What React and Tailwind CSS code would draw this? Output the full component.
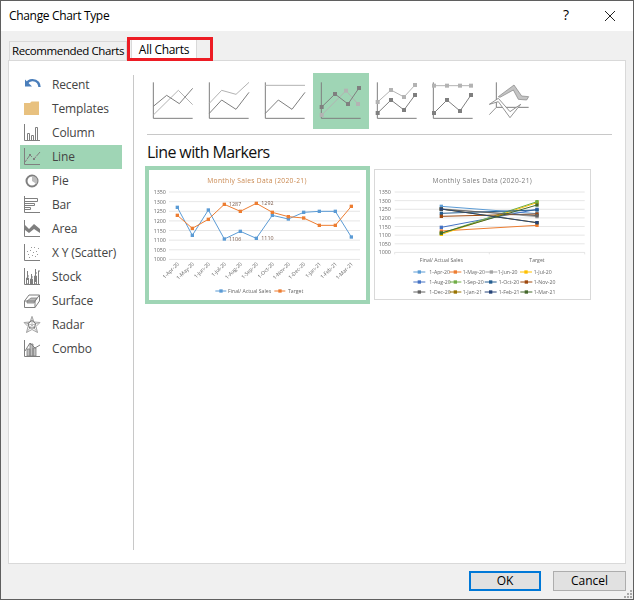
import React from 'react';

const GRAY = '#7f7f7f';
const LIGHT = '#b3b3b3';

const toPoints = (pts) => pts.map((p) => p.join(',')).join(' ');

function Markers({ pts, color }) {
  return pts.map((p, i) => <rect key={i} x={p[0] - 6} y={p[1] - 6} width="12" height="12" fill={color} />);
}

// 56px gallery thumbnails, drawn on a 168 unit grid
const lineTypes = [
  { dark: [[25, 100], [65, 67], [103, 92], [143, 46]], light: [[25, 126], [100, 52], [143, 95]] },
  { dark: [[25, 121], [62, 81], [105, 109], [144, 58]], light: [[25, 91], [62, 52], [105, 64], [144, 28]] },
  { dark: [[25, 121], [64, 81], [105, 109], [144, 58]], light: [[25, 37], [144, 37]] },
  { dark: [[26, 102], [66, 63], [105, 93], [138, 45]], light: [[26, 126], [99, 53], [135, 93]], markers: true, active: true },
  { dark: [[26, 120], [66, 81], [105, 111], [138, 66]], light: [[26, 87], [66, 51], [105, 72], [138, 36]], markers: true },
  { dark: [[27, 120], [66, 81], [105, 114], [138, 66]], light: [[27, 38], [66, 38], [105, 38], [138, 38]], markers: true },
];

function GalleryIcon({ type }) {
  return (
    <div className={`w-[56px] h-[56px] ${type.active ? 'bg-[#9fd5b5]' : ''}`}>
      <svg width="56" height="56" viewBox="0 0 168 168" fill="none">
        <path d="M25 28V136H143" stroke={GRAY} strokeWidth="3" />
        <polyline points={toPoints(type.light)} stroke={LIGHT} strokeWidth="3" />
        <polyline points={toPoints(type.dark)} stroke={GRAY} strokeWidth="3" />
        {type.markers && <Markers pts={type.light} color={LIGHT} />}
        {type.markers && <Markers pts={type.dark} color={GRAY} />}
      </svg>
    </div>
  );
}

function Gallery3D() {
  return (
    <div className="w-[56px] h-[56px]">
      <svg width="56" height="56" viewBox="0 0 168 168" fill="none">
        <path d="M46 28V103H143" stroke={GRAY} strokeWidth="3" />
        <path d="M52 71L99 36L122 69L143 71L137 81L112 79L97 51L57 73Z" fill="#c4c4c4" stroke={GRAY} strokeWidth="2" />
        <path d="M25 94L52 76L87 116L119 94L87 134L52 86Z" fill="#fff" stroke={GRAY} strokeWidth="2.5" />
        <path d="M25 125L46 103" stroke={GRAY} strokeWidth="2.5" />
      </svg>
    </div>
  );
}

function SideIcon({ name }) {
  const s = { stroke: GRAY, strokeWidth: 1, fill: 'none' };
  const axis = <path d="M1.5 0V16.5H17" {...s} />;
  switch (name) {
    case 'Recent':
      return (
        <svg width="18" height="18" viewBox="0 0 18 18" fill="none">
          <path d="M4 7C6 3.5 12 3 15 6.5C16 8 16.5 9.5 16.5 11" stroke="#4a7ebb" strokeWidth="2.4" />
          <path d="M2 3.5V10.5H9Z" fill="#4a7ebb" />
        </svg>
      );
    case 'Templates':
      return (
        <svg width="18" height="18" viewBox="0 0 18 18">
          <path d="M1 3H7L8.5 1.5H16V15H1Z" fill="#e8c17f" />
        </svg>
      );
    case 'Column':
      return (
        <svg width="18" height="18" viewBox="0 0 18 18">
          {axis}
          <path d="M4.5 16V9.5H6.5V16M8.5 16V11.5H10.5V16M12.5 16V3.5H14.5V16" {...s} />
        </svg>
      );
    case 'Line':
      return (
        <svg width="18" height="18" viewBox="0 0 18 18">
          {axis}
          <path d="M2 14L7 7L11 11L17 4" {...s} />
          <path d="M2 10L6 13L12 7L16 12" stroke="#b0c9b8" strokeWidth="1" fill="none" />
          <rect x="6" y="6" width="2" height="2" fill={GRAY} />
          <rect x="10" y="10" width="2" height="2" fill={GRAY} />
        </svg>
      );
    case 'Pie':
      return (
        <svg width="18" height="18" viewBox="0 0 18 18">
          <circle cx="9" cy="9" r="5.5" stroke={GRAY} strokeWidth="2" fill="#fff" />
          <path d="M9 4V9L13.5 12A5 5 0 0 0 9 4Z" fill="#bdbdbd" />
        </svg>
      );
    case 'Bar':
      return (
        <svg width="18" height="18" viewBox="0 0 18 18">
          <path d="M1.5 0V16.5H17" {...s} />
          <path d="M1.5 2.5H14.5V5.5H1.5M1.5 7.5H11.5V9.5H1.5M1.5 11.5H7.5V13.5H1.5" {...s} />
        </svg>
      );
    case 'Area':
      return (
        <svg width="18" height="18" viewBox="0 0 18 18">
          {axis}
          <path d="M2 5L6 9L11 4L17 9V13L11 9L6 13L2 10Z" fill={GRAY} />
        </svg>
      );
    case 'X Y (Scatter)':
      return (
        <svg width="18" height="18" viewBox="0 0 18 18">
          {axis}
          {[[5, 10], [7, 6], [9, 11], [11, 3], [13, 7], [15, 4], [6, 13], [10, 8], [12, 12], [4, 7], [14, 10], [8, 3]].map((d, i) => (
            <rect key={i} x={d[0]} y={d[1]} width="1" height="1" fill="#999" />
          ))}
        </svg>
      );
    case 'Stock':
      return (
        <svg width="18" height="18" viewBox="0 0 18 18">
          {axis}
          <path d="M4.5 3V12M4 8H6M8.5 6V16M8 9H10M12.5 1V14M12 5H14M15.5 3V16M15 3H17" {...s} />
          <path d="M3.5 10H5.5V16H3.5ZM7.5 11H9.5V16H7.5ZM11.5 8H13.5V16H11.5Z" {...s} />
        </svg>
      );
    case 'Surface':
      return (
        <svg width="18" height="18" viewBox="0 0 18 18">
          <path d="M1.5 9L6 3H16.5V9L12 15.5H1.5Z" {...s} />
          <path d="M4 9L8 6H14L11 11H4Z" fill="#b9b9b9" stroke={GRAY} strokeWidth="0.8" />
          <path d="M1.5 9H12V15.5M12 9L16.5 3" {...s} />
        </svg>
      );
    case 'Radar':
      return (
        <svg width="18" height="18" viewBox="0 0 18 18">
          <path d="M9 0.5L11 6L17 6.5L13 10.5L14.5 16.5L9 13.5L3.5 16.5L5 10.5L1 6.5L7 6Z" stroke="#a6a6a6" strokeWidth="1" fill="none" />
          <path d="M9 0.5V9M17 6.5L9 9M14.5 16.5L9 9M3.5 16.5L9 9M1 6.5L9 9" stroke="#a6a6a6" strokeWidth="0.8" />
          <path d="M9 4.5L12.5 7.5L11.5 12L6.5 12L5 7.5Z" stroke="#6f6f6f" strokeWidth="1" fill="none" />
        </svg>
      );
    default:
      return (
        <svg width="18" height="18" viewBox="0 0 18 18">
          {axis}
          <path d="M4 9H7V16H4ZM7 4H10V16H7ZM10 8H13V16H10Z" fill="#c0c0c0" stroke={GRAY} strokeWidth="0.8" />
          <path d="M2 11L7 3L12 8L17 5" {...s} />
        </svg>
      );
  }
}

const chartTypes = ['Recent', 'Templates', 'Column', 'Line', 'Pie', 'Bar', 'Area', 'X Y (Scatter)', 'Stock', 'Surface', 'Radar', 'Combo'];

const months = ['1-Apr-20', '1-May-20', '1-Jun-20', '1-Jul-20', '1-Aug-20', '1-Sep-20', '1-Oct-20', '1-Nov-20', '1-Dec-20', '1-Jan-21', '1-Feb-21', '1-Mar-21'];
const ticks = [1350, 1300, 1250, 1200, 1150, 1100, 1050, 1000];

const actual = [[100, 127], [145, 211], [193, 135], [241, 222], [289, 199], [337, 220], [385, 151], [433, 162], [479, 142], [526, 139], [574, 139], [622, 216]];
const target = [[100, 151], [145, 190], [193, 163], [241, 118], [289, 139], [337, 115], [385, 142], [433, 155], [479, 159], [526, 181], [574, 181], [622, 124]];

function LineChart() {
  return (
    <svg className="block blur-[0.4px]" width="217" height="130" viewBox="15 15 651 390" fontFamily="Open Sans, sans-serif">
      <text x="339" y="53" fontSize="20" fill="#c9874e" textAnchor="middle" letterSpacing="1">Monthly Sales Data (2020-21)</text>
      {ticks.map((t, i) => {
        const y = 81 + i * 28.9;
        return (
          <g key={t}>
            <line x1="75" x2="648" y1={y} y2={y} stroke="#d9d9d9" strokeWidth="2" />
            <text x="29" y={y + 6} fontSize="16" fill="#666">{t}</text>
          </g>
        );
      })}
      {actual.map((p, i) => (
        <text key={months[i]} x={p[0] + 6} y="298" fontSize="15.5" fill="#666" textAnchor="end" transform={`rotate(-45 ${p[0] + 6} 298)`}>{months[i]}</text>
      ))}
      <polyline points={toPoints(actual)} fill="none" stroke="#5b9bd5" strokeWidth="3" />
      <polyline points={toPoints(target)} fill="none" stroke="#ed7d31" strokeWidth="3" />
      {actual.map((p, i) => <rect key={i} x={p[0] - 5} y={p[1] - 5} width="10" height="10" fill="#5b9bd5" />)}
      {target.map((p, i) => <rect key={i} x={p[0] - 5} y={p[1] - 5} width="10" height="10" fill="#ed7d31" />)}
      <g fontSize="16" fill="#7a5a4a">
        <text x="255" y="122">1287</text>
        <text x="352" y="119">1292</text>
        <text x="255" y="228">1106</text>
        <text x="352" y="225">1110</text>
      </g>
      <line x1="214" x2="247" y1="378" y2="378" stroke="#5b9bd5" strokeWidth="3" />
      <rect x="226" y="373" width="10" height="10" fill="#5b9bd5" />
      <text x="252" y="384" fontSize="15.5" fill="#666">Final/ Actual Sales</text>
      <line x1="391" x2="424" y1="378" y2="378" stroke="#ed7d31" strokeWidth="3" />
      <rect x="403" y="373" width="10" height="10" fill="#ed7d31" />
      <text x="432" y="384" fontSize="15.5" fill="#666">Target</text>
    </svg>
  );
}

const series = [
  { name: '1-Apr-20', color: '#5b9bd5', a: 124, b: 146, lx: 124, tx: 172, ly: 321 },
  { name: '1-May-20', color: '#ed7d31', a: 198, b: 181, lx: 232, tx: 272, ly: 321 },
  { name: '1-Jun-20', color: '#a5a5a5', a: 131, b: 155, lx: 340, tx: 377, ly: 321 },
  { name: '1-Jul-20', color: '#ffc000', a: 208, b: 113, lx: 444, tx: 485, ly: 321 },
  { name: '1-Aug-20', color: '#4472c4', a: 187, b: 133, lx: 124, tx: 172, ly: 351 },
  { name: '1-Sep-20', color: '#70ad47', a: 205, b: 110, lx: 232, tx: 272, ly: 351 },
  { name: '1-Oct-20', color: '#255e91', a: 145, b: 135, lx: 338, tx: 380, ly: 351 },
  { name: '1-Nov-20', color: '#9e480e', a: 154, b: 147, lx: 445, tx: 485, ly: 351 },
  { name: '1-Dec-20', color: '#636363', a: 133, b: 152, lx: 124, tx: 172, ly: 381 },
  { name: '1-Jan-21', color: '#997300', a: 132, b: 173, lx: 232, tx: 272, ly: 381 },
  { name: '1-Feb-21', color: '#264478', a: 132, b: 173, lx: 338, tx: 380, ly: 381 },
  { name: '1-Mar-21', color: '#43682b', a: 204, b: 120, lx: 445, tx: 485, ly: 381 },
];

function SeriesChart() {
  return (
    <svg className="block blur-[0.4px]" width="215" height="129" viewBox="9 15 645 387" fontFamily="Open Sans, sans-serif">
      <text x="331" y="53" fontSize="20" fill="#7b7b7b" textAnchor="middle" letterSpacing="1">Monthly Sales Data (2020-21)</text>
      {ticks.map((t, i) => {
        const y = 81 + i * 25.9;
        return (
          <g key={t}>
            <line x1="68" x2="638" y1={y} y2={y} stroke="#d9d9d9" strokeWidth="2" />
            <text x="20" y={y + 6} fontSize="16" fill="#666">{t}</text>
          </g>
        );
      })}
      <path d="M68 262V268M352 262V268M638 262V268" stroke="#d9d9d9" strokeWidth="2" />
      <text x="208" y="290" fontSize="15.5" fill="#666" textAnchor="middle">Final/ Actual Sales</text>
      <text x="495" y="290" fontSize="15.5" fill="#666" textAnchor="middle">Target</text>
      {series.map((d) => (
        <g key={d.name}>
          <line x1="208" x2="495" y1={d.a} y2={d.b} stroke={d.color} strokeWidth="3" />
          <rect x="203" y={d.a - 5} width="10" height="10" fill={d.color} />
          <rect x="490" y={d.b - 5} width="10" height="10" fill={d.color} />
          <line x1={d.lx} x2={d.lx + 36} y1={d.ly} y2={d.ly} stroke={d.color} strokeWidth="3" />
          <rect x={d.lx + 13} y={d.ly - 5} width="10" height="10" fill={d.color} />
          <text x={d.tx} y={d.ly + 5} fontSize="15.5" fill="#666">{d.name}</text>
        </g>
      ))}
    </svg>
  );
}

export default function App() {
  return (
    <div className="w-[634px] h-[600px] flex flex-col overflow-hidden bg-white border border-[#5f5f5f] font-['Open_Sans',sans-serif] text-[12px] text-black">
      {/* Title bar */}
      <div className="h-[30px] flex items-center justify-between pl-[8px] pr-[17px]">
        <span className="tracking-[-0.33px] text-[12px]">Change Chart Type</span>
        <div className="flex items-center gap-[35px]">
          <span className="text-[14px] font-medium leading-none mb-[2px]">?</span>
          <svg width="12" height="12" viewBox="0 0 12 12"><path d="M1 1L11 11M11 1L1 11" stroke="#222" strokeWidth="1" fill="none" /></svg>
        </div>
      </div>

      <div className="flex-1 flex flex-col bg-[#f0f0f0]">
        {/* Tabs */}
        <div className="h-[29px] pl-[8px] flex items-end">
          <div className="w-[118px] h-[19px] flex items-center justify-center bg-[#f0f0f0] border border-b-0 border-[#d9d9d9] whitespace-nowrap text-[11.5px] tracking-[-0.4px] font-medium">Recommended Charts</div>
          <div className="relative ml-[4px] w-[66px] h-[22px] flex items-center justify-center bg-white border border-b-0 border-[#d9d9d9] tracking-[-0.3px]">
            All Charts
            <div className="absolute left-[-5px] top-[-2px] w-[86px] h-[24px] border-[3px] border-[#ed1c24]" />
          </div>
        </div>

        {/* Panel */}
        <div className="mx-[7px] h-[504px] flex bg-white border border-[#d9d9d9]">
          <div className="w-[124px] pt-[12px] pl-[11px]">
            {chartTypes.map((name) => (
              <div key={name} className={`w-[102px] h-[24px] flex items-center pl-[3px] ${name === 'Line' ? 'bg-[#9fd5b5]' : ''}`}>
                <SideIcon name={name} />
                <span className="ml-[11px] text-[#444] whitespace-nowrap tracking-[-0.15px]">{name}</span>
              </div>
            ))}
          </div>
          <div className="mt-[14px] w-px h-[475px] bg-[#c8c8c8]" />
          <div className="pl-[11px] pt-[12px]">
            <div className="flex">
              {lineTypes.map((type, i) => <GalleryIcon key={i} type={type} />)}
              <Gallery3D />
            </div>
            <div className="mt-[5px] ml-[2px] w-[465px] h-px bg-[#c8c8c8]" />
            <div className="mt-[6px] ml-[2px] h-[22px] flex items-center text-[16px] tracking-[-0.6px] text-[#111]">Line with Markers</div>
            <div className="mt-[3px] flex items-start gap-[4px]">
              <div className="w-[225px] h-[138px] border-[4px] border-[#9fd5b5] bg-white"><LineChart /></div>
              <div className="mt-[3px] w-[217px] h-[131px] border border-[#d9d9d9] bg-white"><SeriesChart /></div>
            </div>
          </div>
        </div>

        {/* Footer buttons */}
        <div className="relative flex-1 flex justify-end items-start gap-[12px] pt-[7px] pr-[7px]">
          <button className="w-[72px] h-[20px] flex items-center justify-center bg-[#e1e1e1] border-2 border-[#0078d7]">OK</button>
          <button className="w-[73px] h-[20px] flex items-center justify-center bg-[#e1e1e1] border border-[#adadad]">Cancel</button>
          <svg className="absolute right-0 bottom-0" width="9" height="9" viewBox="0 0 9 9">
            {[[6, 0], [3, 3], [6, 3], [0, 6], [3, 6], [6, 6]].map((d, i) => <rect key={i} x={d[0]} y={d[1]} width="2" height="2" fill="#a8a8a8" />)}
          </svg>
        </div>
      </div>
    </div>
  );
}
